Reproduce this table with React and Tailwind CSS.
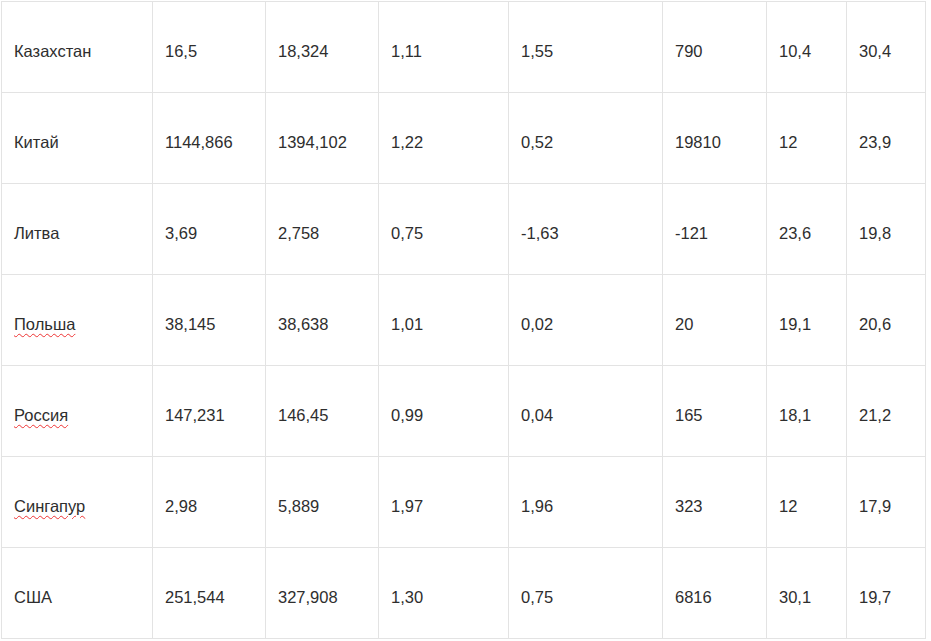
const rows = [
  ["Казахстан", "16,5", "18,324", "1,11", "1,55", "790", "10,4", "30,4"],
  ["Китай", "1144,866", "1394,102", "1,22", "0,52", "19810", "12", "23,9"],
  ["Литва", "3,69", "2,758", "0,75", "-1,63", "-121", "23,6", "19,8"],
  ["Польша", "38,145", "38,638", "1,01", "0,02", "20", "19,1", "20,6"],
  ["Россия", "147,231", "146,45", "0,99", "0,04", "165", "18,1", "21,2"],
  ["Сингапур", "2,98", "5,889", "1,97", "1,96", "323", "12", "17,9"],
  ["США", "251,544", "327,908", "1,30", "0,75", "6816", "30,1", "19,7"],
];

const widths = ["w-[151px]", "w-[113px]", "w-[113px]", "w-[130px]", "w-[154px]", "w-[104px]", "w-[80px]", "w-[79px]"];

const misspelled = ["Польша", "Россия", "Сингапур"];

export default function App() {
  return (
    <div className="w-[931px] h-[641px] bg-white pt-px pl-px font-['Liberation_Sans',Arial,sans-serif] text-[16.5px] text-[#2e2e2e]">
      <table className="table-fixed border-collapse">
        <colgroup>
          {widths.map((w, i) => (
            <col key={i} className={w} />
          ))}
        </colgroup>
        <tbody>
          {rows.map((row) => (
            <tr key={row[0]} className="h-[91px]">
              {row.map((cell, j) => (
                <td
                  key={j}
                  className="border border-[#e3e3e3] pl-3 pt-2 align-middle whitespace-nowrap"
                >
                  {j === 0 && misspelled.includes(cell) ? (
                    <span className="underline decoration-wavy decoration-[#e33] decoration-1 underline-offset-[3px]">
                      {cell}
                    </span>
                  ) : (
                    cell
                  )}
                </td>
              ))}
            </tr>
          ))}
        </tbody>
      </table>
    </div>
  );
}
